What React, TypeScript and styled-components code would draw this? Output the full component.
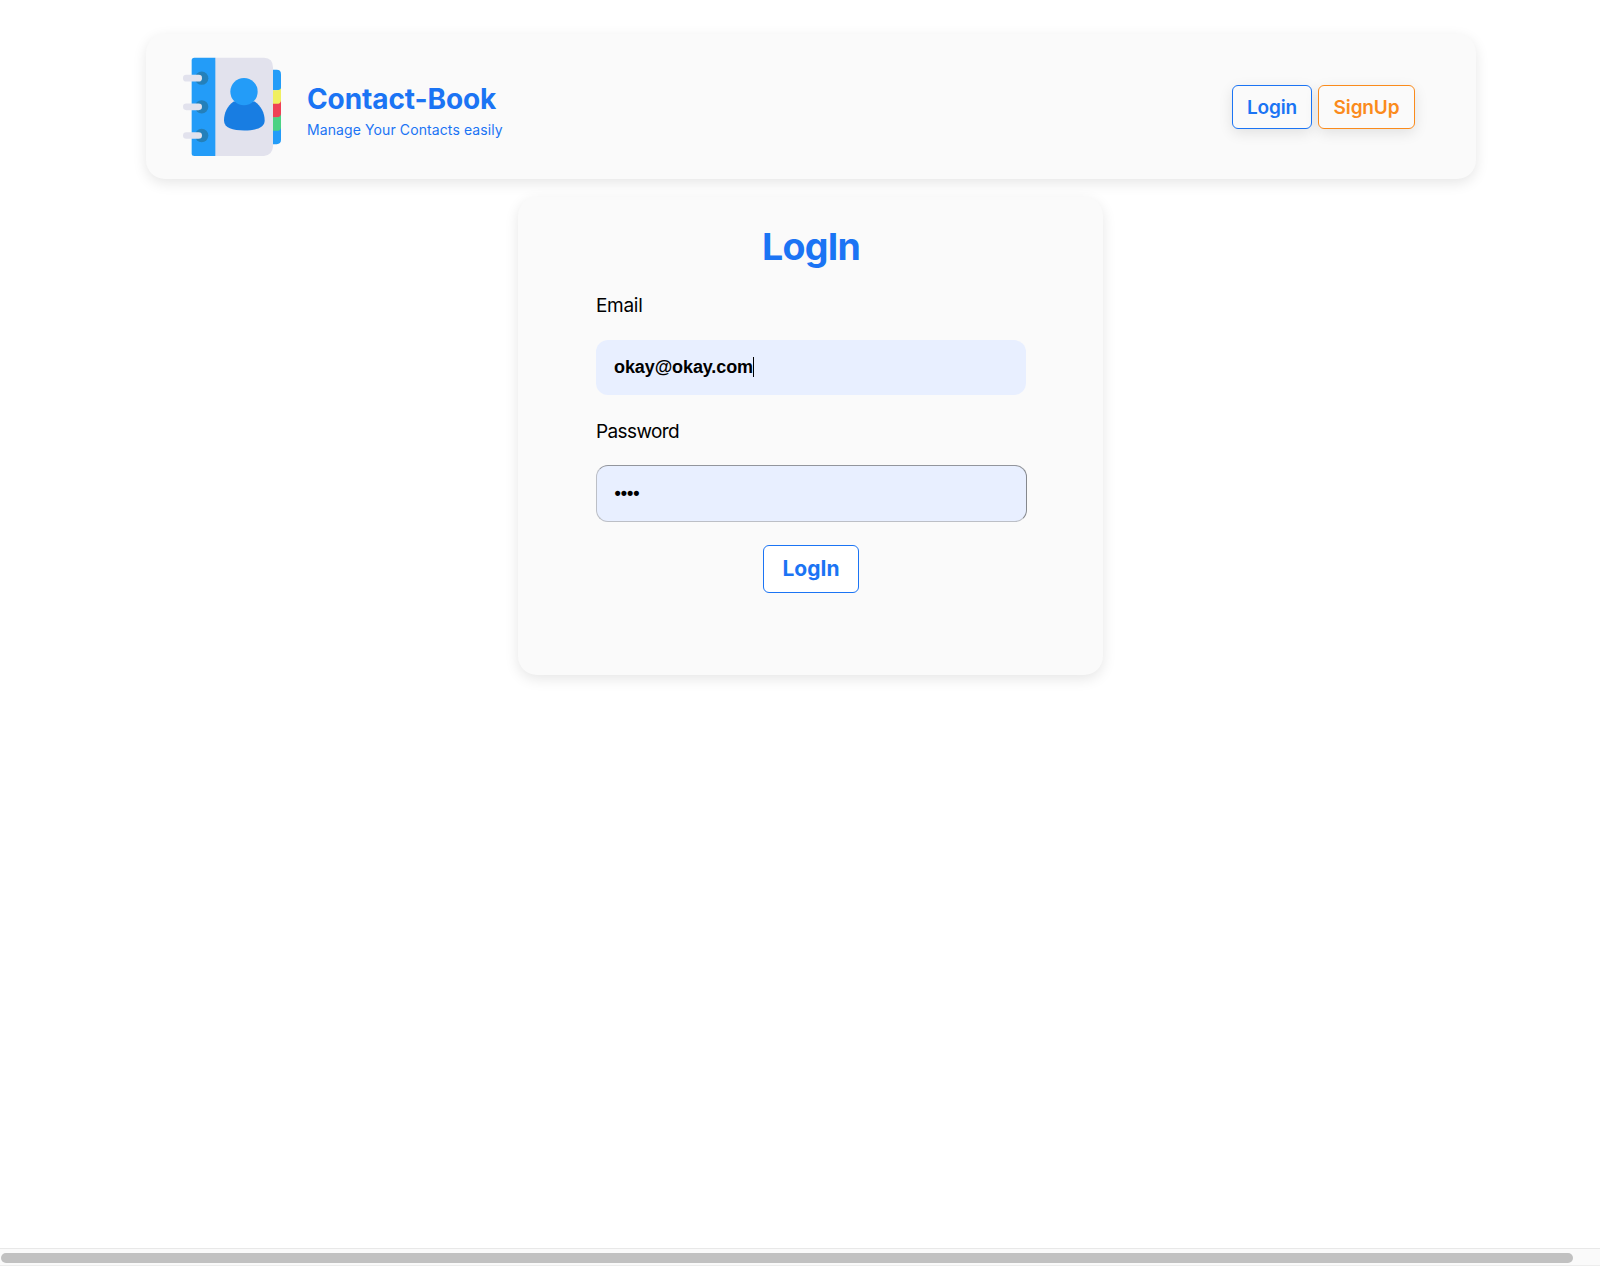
import React from "react";
import styled, { createGlobalStyle } from "styled-components";

const BLUE = "#1b74f4";
const ORANGE = "#fa8b1c";

const GlobalStyle = createGlobalStyle`
  *, *::before, *::after { box-sizing: border-box; }
  body {
    margin: 0;
    overflow: hidden;
    background: #fff;
    color: #000;
    font-family: Inter, "Liberation Sans", sans-serif;
  }
`;

const Page = styled.div`
  display: flex;
  flex-direction: column;
  height: 1266px;
  padding-top: 34px;
`;

const Panel = styled.div`
  background: #fafafa;
  border-radius: 19px;
  box-shadow: 0 4px 14px rgba(0, 0, 0, 0.1);
`;

const Header = styled(Panel).attrs({ as: "header" })`
  display: flex;
  align-items: center;
  flex: none;
  width: 1330px;
  height: 145px;
  margin-left: 146px;
  padding: 0 61px 0 37px;
`;

const Logo = styled.svg`
  display: block;
  width: 98px;
  height: 99px;
`;

const Brand = styled.div`
  margin: 9px auto 0 26px;
`;

const BrandName = styled.h1`
  margin: 0;
  color: ${BLUE};
  font-size: 28px;
  font-weight: 650;
  line-height: 32px;
  letter-spacing: -0.1px;
  white-space: nowrap;
`;

const Tagline = styled.p`
  margin: 5px 0 0;
  color: ${BLUE};
  font-size: 14px;
  line-height: 20px;
  letter-spacing: 0.1px;
  white-space: nowrap;
`;

const Actions = styled.nav`
  display: flex;
  gap: 6px;
`;

const NavButton = styled.button<{ $color: string; $width: number }>`
  width: ${(p) => p.$width}px;
  height: 44px;
  padding: 2px 0 0;
  border: 1px solid ${(p) => p.$color};
  border-radius: 6px;
  background: #fafafa;
  box-shadow: 0 4px 14px rgba(0, 0, 0, 0.1);
  color: ${(p) => p.$color};
  font: 580 19px/24px Inter, sans-serif;
  letter-spacing: -0.15px;
`;

const Card = styled(Panel).attrs({ as: "main" })`
  flex: none;
  width: 585px;
  height: 478px;
  margin: 18px 0 0 518px;
  padding: 30px 77px 0 78px;
`;

const Form = styled.form`
  display: flex;
  flex-direction: column;
`;

const Title = styled.h2`
  margin: 0;
  color: ${BLUE};
  font-size: 37.5px;
  font-weight: 700;
  line-height: 40px;
  letter-spacing: -0.75px;
  text-align: center;
`;

const Label = styled.label<{ $top: number; $spacing: number }>`
  margin-top: ${(p) => p.$top}px;
  font-size: 19px;
  line-height: 24px;
  letter-spacing: ${(p) => p.$spacing}px;
`;

const Field = styled.div<{ $outlined?: boolean }>`
  display: flex;
  align-items: center;
  height: ${(p) => (p.$outlined ? 57 : 55)}px;
  width: ${(p) => (p.$outlined ? 431 : 430)}px;
  margin-top: ${(p) => (p.$outlined ? 21 : 22)}px;
  padding-left: ${(p) => (p.$outlined ? 17.6 : 18)}px;
  border: ${(p) => (p.$outlined ? "1px solid" : "0")};
  border-color: #92959c #85888d #bcbfc6 #bcbfc6;
  border-radius: 12px;
  background: #e8efff;
  font: 700 18px/22px "Liberation Sans", Arial, sans-serif;
`;

const Value = styled.span`
  margin-top: -1px;
  letter-spacing: -0.1px;
`;

const Caret = styled.span`
  width: 1px;
  height: 20px;
  margin-top: -1px;
  background: #000;
`;

const SubmitButton = styled.button`
  align-self: center;
  width: 96px;
  height: 48px;
  margin-top: 23px;
  padding: 0;
  border: 1px solid ${BLUE};
  border-radius: 6px;
  background: #fff;
  color: ${BLUE};
  font: 700 21px/26px Inter, sans-serif;
`;

const ScrollTrack = styled.div`
  height: 18px;
  margin-top: auto;
  padding: 4px 0 0 1px;
  border-top: 1px solid #e8e8e8;
  border-bottom: 1px solid #ededed;
  background: #fafafa;
`;

const ScrollThumb = styled.div`
  width: 1572px;
  height: 10px;
  border-radius: 5px;
  background: #c1c1c1;
`;

const RING_ROWS = [84, 170, 256];

function ContactBookLogo() {
  return (
    <Logo viewBox="24 20.5 294 297" aria-hidden="true">
      <path d="M292 59H305Q318 59 318 72V120H292Z" fill="#239cf8" />
      <path d="M292 120H305Q318 120 318 112V162H292Z" fill="#f0ef60" />
      <path d="M292 161H305Q318 161 318 150V203H292Z" fill="#ef4055" />
      <path d="M292 201H305Q318 201 318 190V243H292Z" fill="#4bd283" />
      <path d="M292 242H305Q318 242 318 231V269Q318 282 305 282H292Z" fill="#239cf8" />
      <path d="M120 23H267Q294 24 294 52V290Q292 315 267 317.500H120Z" fill="#e2e2ed" />
      <path d="M58 23H121V317.500H58Q50 317.500 50 310V31Q50 23 58 23Z" fill="#239cf8" />
      {RING_ROWS.map((y) => (
        <g key={y}>
          <circle cx="80" cy={y} r="20" fill="#2480ba" />
          <rect x="24" y={y - 10} width="57" height="20" rx="10" fill="#e2e2ed" />
        </g>
      ))}
      <path
        d="M176 154C157 167 147 188 147 211C147 233 173 241 208 241C242 241 269 233 269 211C269 188 258 167 239 154Z"
        fill="#187de2"
      />
      <circle cx="207" cy="124.500" r="41" fill="#239cf8" />
    </Logo>
  );
}

export default function App() {
  return (
    <>
      <GlobalStyle />
      <Page>
        <Header>
          <ContactBookLogo />
          <Brand>
            <BrandName>Contact-Book</BrandName>
            <Tagline>Manage Your Contacts easily</Tagline>
          </Brand>
          <Actions>
            <NavButton $color={BLUE} $width={80}>Login</NavButton>
            <NavButton $color={ORANGE} $width={97}>SignUp</NavButton>
          </Actions>
        </Header>
        <Card>
          <Form>
            <Title>LogIn</Title>
            <Label $top={27} $spacing={-0.3}>Email</Label>
            <Field>
              <Value>okay@okay.com</Value>
              <Caret />
            </Field>
            <Label $top={25} $spacing={-0.6}>Password</Label>
            <Field $outlined>
              <Value>••••</Value>
            </Field>
            <SubmitButton type="button">LogIn</SubmitButton>
          </Form>
        </Card>
        <ScrollTrack>
          <ScrollThumb />
        </ScrollTrack>
      </Page>
    </>
  );
}
